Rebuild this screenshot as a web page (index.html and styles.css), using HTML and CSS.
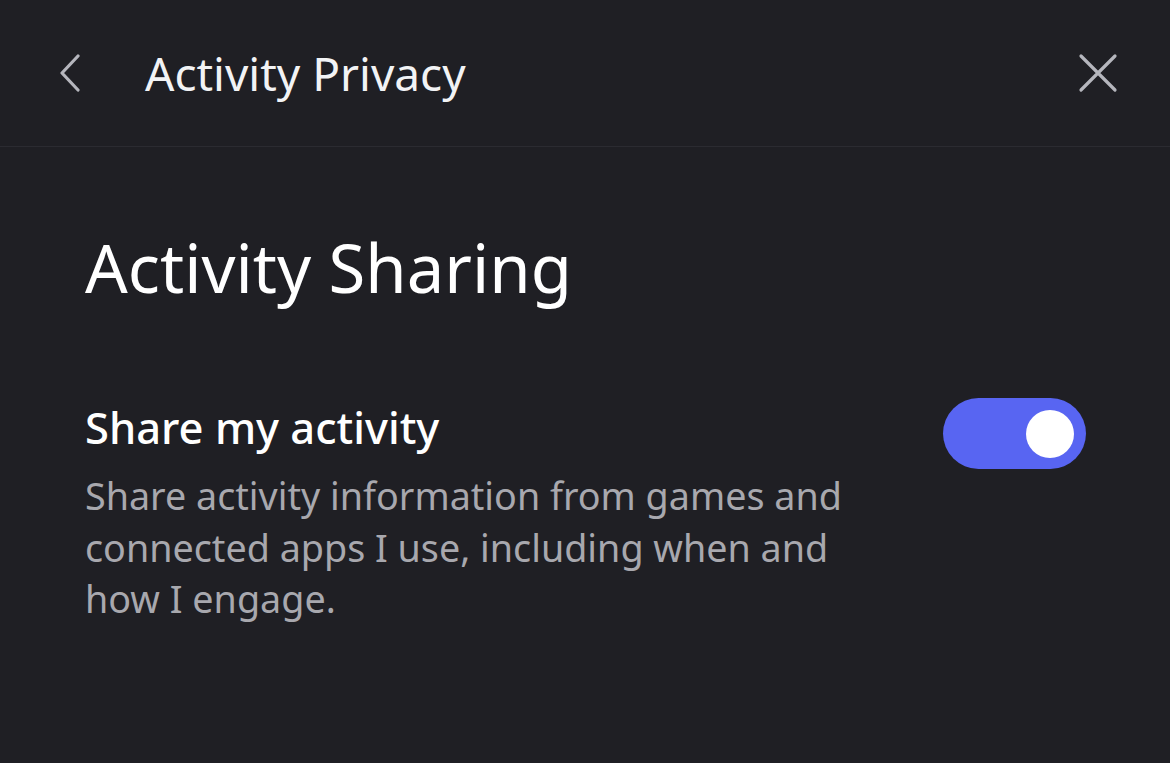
FILE: index.html
```html
<!DOCTYPE html>
<html>
<head>
<meta charset="utf-8">
<link rel="stylesheet" href="styles.css">
</head>
<body>
<div class="screen">
  <header class="topbar">
    <button class="icon-btn back" aria-label="Back">
      <svg width="24" height="38" viewBox="0 0 24 38"><path d="M20 2 L4 19 L20 36" fill="none" stroke="#b5b6bd" stroke-width="3.2" stroke-linecap="round" stroke-linejoin="round"/></svg>
    </button>
    <h1 class="topbar-title">Activity Privacy</h1>
    <button class="icon-btn close" aria-label="Close">
      <svg width="40" height="40" viewBox="0 0 40 40"><path d="M3 3 L37 37 M37 3 L3 37" fill="none" stroke="#b5b6bd" stroke-width="3.2" stroke-linecap="round"/></svg>
    </button>
  </header>
  <main class="content">
    <h2 class="section-title">Activity Sharing</h2>
    <div class="setting">
      <div class="setting-text">
        <div class="setting-label">Share my activity</div>
        <div class="setting-desc">Share activity information from games and connected apps I use, including when and how I engage.</div>
      </div>
      <div class="toggle on"><div class="knob"></div></div>
    </div>
  </main>
</div>
</body>
</html>
```

FILE: styles.css
```css
html, body {
  margin: 0;
  padding: 0;
  background: #1f1f24;
}
body {
  font-family: "Noto Sans", "Open Sans", sans-serif;
  color: #f2f3f5;
}
.screen {
  width: 1170px;
  height: 763px;
  overflow: hidden;
}
.topbar {
  height: 147px;
  border-bottom: 1px solid #2b2b31;
  display: flex;
  align-items: center;
  padding: 0 52px 0 58px;
  box-sizing: border-box;
}
.icon-btn {
  background: none;
  border: 0;
  padding: 0;
  display: flex;
  align-items: center;
  justify-content: center;
}
.back { width: 24px; margin-right: 63px; }
.topbar-title {
  flex: 1;
  margin: 0;
  font-size: 46px;
  font-weight: 400;
  color: #f2f3f5;
}
.close { width: 40px; }
.content {
  padding: 76px 84px 0 85px;
}
.section-title {
  margin: 0;
  font-size: 67px;
  font-weight: 400;
  line-height: 88px;
  color: #ffffff;
}
.setting {
  margin-top: 90px;
  display: flex;
  align-items: flex-start;
  justify-content: space-between;
}
.setting-text {
  width: 790px;
}
.setting-label {
  font-size: 43.5px;
  font-weight: 500;
  line-height: 52px;
  color: #ffffff;
}
.setting-desc {
  margin-top: 17px;
  font-size: 37.7px;
  line-height: 51.5px;
  color: #a8a8ae;
}
.toggle {
  width: 143px;
  height: 71px;
  border-radius: 36px;
  background: #5865f2;
  display: flex;
  align-items: center;
  justify-content: flex-end;
  padding: 0 12px;
  box-sizing: border-box;
  margin-top: -3px;
}
.knob {
  width: 48px;
  height: 48px;
  border-radius: 50%;
  background: #ffffff;
}
```
